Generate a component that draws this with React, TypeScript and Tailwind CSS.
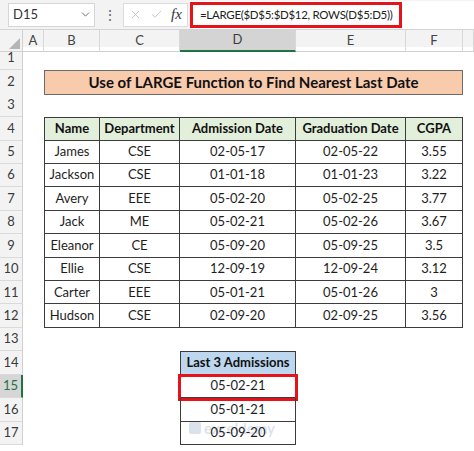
import React from "react";
import { ChevronDown, X, Check } from "lucide-react";

const students = [
  ["James", "CSE", "02-05-17", "02-05-22", "3.55"],
  ["Jackson", "CSE", "01-01-18", "01-01-23", "3.22"],
  ["Avery", "EEE", "05-02-20", "05-02-25", "3.77"],
  ["Jack", "ME", "05-02-21", "05-02-26", "3.67"],
  ["Eleanor", "CE", "05-09-20", "05-09-25", "3.5"],
  ["Ellie", "CSE", "12-09-19", "12-09-24", "3.12"],
  ["Carter", "EEE", "05-01-21", "05-01-26", "3"],
  ["Hudson", "CSE", "02-09-20", "02-09-25", "3.56"],
];

const headers = ["Name", "Department", "Admission Date", "Graduation Date", "CGPA"];
const results = ["05-02-21", "05-01-21", "05-09-20"];
const cols = ["A", "B", "C", "D", "E", "F", ""];

const grid = "grid grid-cols-[23px_21px_56px_80px_116px_110px_57px_11px]";
const rowH = "h-[23.42px]";

function RowLabel({ n, active }: { n: number; active?: boolean }) {
  return (
    <div
      className={`flex items-center justify-center border-b border-[#dadada] text-[13px] ${
        active
          ? "bg-[#d6d6d6] text-[#217346] border-r-2 border-r-[#217346]"
          : "bg-[#f3f3f3] text-[#3a3a3a] border-r border-r-[#d0d0d0]"
      }`}
    >
      {n}
    </div>
  );
}

export default function App() {
  const line = "border-[#3c3c3c]";

  return (
    <div className="w-[474px] h-[451px] overflow-hidden bg-white font-['Lato',sans-serif] text-[#1e1e1e]">
      {/* Formula bar */}
      <div className="flex h-[30px] items-center bg-[#f3f3f3] border-b border-[#d4d4d4]">
        <div className="ml-[8px] flex h-[24px] w-[87px] items-center justify-between border border-[#d6d6d6] bg-white pl-[4px] pr-[2px] text-[13px] text-[#333]">
          <span>D15</span>
          <ChevronDown className="h-[13px] w-[13px] text-[#555]" strokeWidth={1.5} />
        </div>
        <span className="ml-[8px] text-[14px] leading-none text-[#666]">⋮</span>
        <div className="ml-[6px] flex h-[24px] w-[65px] items-center gap-[8px] border border-[#dcdcdc] bg-white pl-[5px]">
          <X className="h-[13px] w-[13px] text-[#b4b4b4]" strokeWidth={1.4} />
          <Check className="h-[13px] w-[13px] text-[#b4b4b4]" strokeWidth={1.4} />
          <span className="font-['Liberation_Serif',serif] text-[15px] italic leading-none text-[#333]">
            fx
          </span>
        </div>
        <div className="ml-[2px] flex h-[28px] flex-1 items-center bg-white">
          <div className="flex h-[26px] w-[212px] items-center whitespace-nowrap border-[3px] border-[#e5141b] pl-[7px] text-[11.5px] tracking-[-0.3px] text-[#222]">
            =LARGE($D$5:$D$12, ROWS(D$5:D5))
          </div>
        </div>
      </div>

      {/* Column headers */}
      <div className={`${grid} h-[17px] bg-[#f3f3f3] text-[13px] text-[#444]`}>
        <div className="relative border-r border-b border-[#d0d0d0]">
          <svg className="absolute bottom-[2px] right-[2px]" width="11" height="11" viewBox="0 0 11 11">
            <polygon points="11,0 11,11 0,11" fill="#b5b5b5" />
          </svg>
        </div>
        {cols.map((c) => (
          <div
            key={c || "g"}
            className={`flex items-center justify-center border-r border-[#d8d8d8] ${
              c === "D"
                ? "bg-[#d4d4d4] border-b-2 border-b-[#217346] text-[#3c3c3c]"
                : "border-b border-b-[#d0d0d0]"
            }`}
          >
            {c}
          </div>
        ))}
      </div>

      {/* Row 1 */}
      <div className={`${grid} ${rowH}`}>
        <RowLabel n={1} />
      </div>

      {/* Row 2: title */}
      <div className={`${grid} ${rowH}`}>
        <RowLabel n={2} />
        <div />
        <div className="col-span-5 flex items-center justify-center border border-[#6b6b6b] bg-[#f8cbad] text-[15px] font-bold text-[#111]">
          Use of LARGE Function to Find Nearest Last Date
        </div>
      </div>

      {/* Row 3 */}
      <div className={`${grid} ${rowH}`}>
        <RowLabel n={3} />
      </div>

      {/* Row 4: table header */}
      <div className={`${grid} ${rowH}`}>
        <RowLabel n={4} />
        <div />
        {headers.map((h, i) => (
          <div
            key={h}
            className={`flex items-center justify-center border-t border-b border-r ${line} bg-[#e2efda] text-[13px] font-bold text-[#111] ${
              i === 0 ? "border-l" : ""
            }`}
          >
            {h}
          </div>
        ))}
      </div>

      {/* Rows 5-12 */}
      {students.map((s, r) => (
        <div key={s[0]} className={`${grid} ${rowH}`}>
          <RowLabel n={r + 5} />
          <div />
          {s.map((v, i) => (
            <div
              key={i}
              className={`flex items-center justify-center border-b border-r ${line} text-[13px] ${
                i === 0 ? "border-l" : ""
              }`}
            >
              {v}
            </div>
          ))}
        </div>
      ))}

      {/* Row 13 */}
      <div className={`${grid} ${rowH}`}>
        <RowLabel n={13} />
      </div>

      {/* Row 14 */}
      <div className={`${grid} ${rowH}`}>
        <RowLabel n={14} />
        <div />
        <div />
        <div />
        <div className={`flex items-center justify-center border ${line} bg-[#bdd7ee] text-[13px] font-bold text-[#111]`}>
          Last 3 Admissions
        </div>
      </div>

      {/* Rows 15-17 */}
      {results.map((v, i) => (
        <div key={v} className={`${grid} ${rowH}`}>
          <RowLabel n={15 + i} active={i === 0} />
          <div />
          <div />
          <div />
          <div
            className={`relative flex items-center justify-center border-b border-l border-r ${line} text-[13px]`}
          >
            {i === 2 && (
              <div className="pointer-events-none absolute left-[8px] top-[-5px] flex items-center gap-[3px] opacity-30">
                <div className="h-[12px] w-[12px] rounded-[2px] bg-[#8aa2c8]" />
                <span className="text-[15px] font-bold text-[#8aa2c8]">exceldemy</span>
              </div>
            )}
            <span className="relative">{v}</span>
            {i === 0 && (
              <div className="absolute -left-[3px] -right-[3px] -top-[1px] -bottom-[4px] border-[3px] border-[#e5141b]" />
            )}
          </div>
        </div>
      ))}
    </div>
  );
}
